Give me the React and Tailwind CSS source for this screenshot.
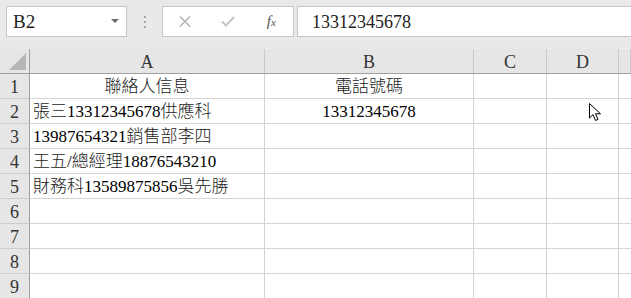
import React from "react";

const CJK = /[\u3400-\u9fff\uff00-\uffef]/;

// split text into latin / CJK runs so each gets its own font
function Mixed({ text }) {
  const parts = text.match(/[\u3400-\u9fff\uff00-\uffef]+|[^\u3400-\u9fff\uff00-\uffef]+/g) || [];
  return parts.map((p, i) =>
    CJK.test(p) ? (
      <span key={i} className="font-['Noto_Sans_CJK_TC',sans-serif] text-[17px] font-light text-[#1a1a1a]">
        {p}
      </span>
    ) : (
      <span key={i} className="font-['Liberation_Serif',serif] text-[17px]">
        {p}
      </span>
    )
  );
}

const rows = [
  { a: "聯絡人信息", b: "電話號碼", center: true },
  { a: "張三13312345678供應科", b: "13312345678" },
  { a: "13987654321銷售部李四", b: "" },
  { a: "王五/總經理18876543210", b: "" },
  { a: "財務科13589875856吳先勝", b: "" },
  { a: "", b: "" },
  { a: "", b: "" },
  { a: "", b: "" },
  { a: "", b: "" },
];

const cols = ["A", "B", "C", "D", ""];

export default function App() {
  return (
    <div className="relative w-[631px] h-[298px] overflow-hidden bg-[#e9e9e9] font-['Liberation_Serif',serif] text-black">
      {/* Formula bar */}
      <div className="flex h-[49px] items-start pt-[6px] pl-[6px]">
        <div className="flex h-[31px] w-[121px] items-center justify-between border border-[#c6c6c6] bg-white pl-[6px] pr-[7px]">
          <span className="text-[19px] leading-[22px] text-[#222]">B2</span>
          <svg width="8" height="5" viewBox="0 0 8 5">
            <path d="M0 0 H8 L4 4 Z" fill="#6a6a6a" />
          </svg>
        </div>
        <div className="flex h-[31px] w-[35px] flex-col items-center justify-center gap-[3px]">
          <span className="h-[2px] w-[2px] bg-[#a8a8a8]" />
          <span className="h-[2px] w-[2px] bg-[#a8a8a8]" />
          <span className="h-[2px] w-[2px] bg-[#a8a8a8]" />
        </div>
        <div className="flex h-[31px] w-[132px] items-center border border-[#c6c6c6] bg-white">
          <div className="flex w-[44px] justify-center">
            <svg width="12" height="11" viewBox="0 0 12 11">
              <path d="M1 0.5 L11 10.5 M11 0.5 L1 10.5" stroke="#b0b0b0" strokeWidth="1.4" />
            </svg>
          </div>
          <div className="flex w-[44px] justify-center">
            <svg width="14" height="11" viewBox="0 0 14 11">
              <path d="M1 5.5 L5 9.5 L13 1" stroke="#c4c4c4" strokeWidth="2" fill="none" />
            </svg>
          </div>
          <div className="flex w-[44px] justify-center">
            <span className="text-[15px] italic leading-[18px] text-[#555]">
              f<span className="text-[11px]">x</span>
            </span>
          </div>
        </div>
        <div className="ml-[3px] flex h-[31px] flex-1 items-center border-y border-l border-[#c6c6c6] bg-white pl-[14px]">
          <span className="text-[18px] leading-[22px] text-[#222]">13312345678</span>
        </div>
      </div>

      {/* Sheet grid */}
      <div className="grid grid-cols-[30px_235px_209px_73px_72px_1fr]">
        {/* column headers */}
        <div className="relative h-[25px] border-r border-b border-[#9f9f9f] bg-[#e6e6e6]">
          <svg className="absolute left-[9px] top-[4px]" width="17" height="17" viewBox="0 0 17 17">
            <path d="M17 0 V17 H0 Z" fill="#b5b5b5" />
          </svg>
        </div>
        {cols.map((c, i) => (
          <div key={i} className="h-[25px] border-b border-[#9f9f9f] bg-[#e6e6e6]">
            <div className="flex h-full w-full items-end justify-center border-r border-[#c8c8c8]">
              <span className="text-[18px] leading-[22px] text-[#333]">{c}</span>
            </div>
          </div>
        ))}

        {/* rows */}
        {rows.map((r, i) => (
          <React.Fragment key={i}>
            <div className="flex h-[25px] items-end justify-center border-r border-b border-r-[#9f9f9f] border-b-[#cdcdcd] bg-[#e6e6e6]">
              <span className="text-[18px] leading-[22px] text-[#333]">{i + 1}</span>
            </div>
            <div
              className={
                r.center
                  ? "flex h-[25px] items-end justify-center whitespace-nowrap border-r border-b border-[#d4d4d4] bg-white leading-[22px]"
                  : "flex h-[25px] items-end justify-start whitespace-nowrap border-r border-b border-[#d4d4d4] bg-white pl-[3px] leading-[22px]"
              }
            >
              <span>
                <Mixed text={r.a} />
              </span>
            </div>
            <div className="flex h-[25px] items-end justify-center whitespace-nowrap border-r border-b border-[#d4d4d4] bg-white leading-[22px]">
              <span>
                <Mixed text={r.b} />
              </span>
            </div>
            <div className="h-[25px] border-r border-b border-[#d4d4d4] bg-white" />
            <div className="h-[25px] border-r border-b border-[#d4d4d4] bg-white" />
            <div className="h-[25px] border-b border-[#d4d4d4] bg-white" />
          </React.Fragment>
        ))}
      </div>

      {/* mouse pointer */}
      <svg className="absolute left-[589px] top-[103px]" width="13" height="19" viewBox="0 0 13 19">
        <path
          d="M0.5 0.5 L0.5 15 L4 11.6 L6.6 17.5 L9 16.4 L6.5 10.8 L11.5 10.8 Z"
          fill="white"
          stroke="black"
          strokeWidth="1"
          strokeLinejoin="round"
        />
      </svg>
    </div>
  );
}
